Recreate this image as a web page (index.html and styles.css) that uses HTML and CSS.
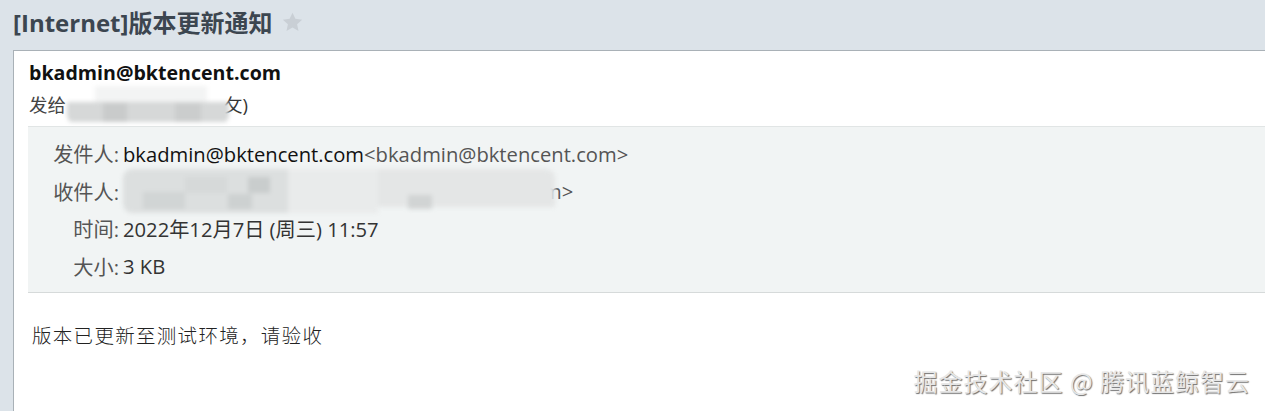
FILE: index.html
```html
<!DOCTYPE html>
<html lang="zh-CN">
<head>
<meta charset="utf-8">
<title>[Internet]版本更新通知</title>
<link rel="stylesheet" href="styles.css">
</head>
<body>
<div class="page">
  <div class="subject">
    <h1 class="subject-text">[Internet]版本更新通知</h1>
    <svg class="star" width="21" height="20" viewBox="0 0 24 23" aria-hidden="true"><path d="M12 0.8l3.3 7.1 7.8 0.9-5.8 5.3 1.6 7.7L12 17.9l-6.9 3.9 1.6-7.7L0.9 8.8l7.8-0.9z" fill="#c9cfd5"/></svg>
  </div>
  <div class="card">
    <div class="from-name">bkadmin@bktencent.com</div>
    <div class="to-line">发给<span class="mask mask-small"></span><span class="tail">攵)</span></div>
    <div class="meta">
      <div class="meta-row"><span class="label">发件人:</span><span class="value">bkadmin@bktencent.com</span><span class="addr">&lt;bkadmin@bktencent.com&gt;</span></div>
      <div class="meta-row"><span class="label">收件人:</span><span class="mask mask-wide"></span><span class="addr tail-addr">m&gt;</span></div>
      <div class="meta-row"><span class="label">时间:</span><span class="value dim">2022年12月7日 (周三) 11:57</span></div>
      <div class="meta-row"><span class="label">大小:</span><span class="value dim">3 KB</span></div>
    </div>
    <div class="body-text">版本已更新至测试环境，请验收</div>
  </div>
  <div class="watermark">掘金技术社区 @ 腾讯蓝鲸智云</div>
</div>
</body>
</html>
```

FILE: styles.css
```css
html, body {
  margin: 0;
  padding: 0;
  height: 100%;
}
body {
  background: #dce3e9;
  font-family: "Open Sans", "Noto Sans CJK SC", sans-serif;
  overflow: hidden;
}
.page {
  position: relative;
  height: 411px;
  display: flex;
  flex-direction: column;
}
.subject {
  height: 50px;
  display: flex;
  align-items: center;
  padding-left: 13px;
  box-sizing: border-box;
  gap: 10px;
}
.subject-text {
  margin: 0;
  font-size: 24px;
  font-weight: 700;
  color: #3c4650;
  line-height: 1;
  position: relative;
  top: -2px;
}
.star {
  position: relative;
  top: -3px;
}
.card {
  flex: 1;
  margin-left: 13px;
  background: #ffffff;
  border-left: 1px solid #a9b1b7;
  border-top: 1px solid #a9b1b7;
  padding-top: 9px;
}
.from-name {
  padding-left: 15px;
  font-size: 19.6px;
  font-weight: 700;
  color: #111;
  line-height: 26px;
}
.to-line {
  padding-left: 15px;
  margin-top: 6px;
  font-size: 18.5px;
  color: #444;
  height: 26px;
  line-height: 26px;
  display: flex;
  align-items: center;
}
.mask {
  display: inline-block;
  flex: none;
  filter: blur(2px);
  border-radius: 9px;
}
.mask-small {
  width: 162px;
  height: 38px;
  margin-left: 1px;
  background:
    linear-gradient(#c9cbcb, #c9cbcb) 36px 17px / 24px 19px no-repeat,
    linear-gradient(#cbcdcd, #cbcdcd) 108px 17px / 26px 19px no-repeat,
    linear-gradient(#d6d8d8, #d6d8d8) 0 16px / 162px 20px no-repeat,
    linear-gradient(#f3f4f4, #f3f4f4) 28px 0 / 112px 16px no-repeat;
}
.tail {
  color: #333;
  margin-left: -5px;
}
.meta {
  margin-left: 14px;
  margin-top: 8px;
  background: #f1f4f4;
  border-top: 1px solid #e1e5e5;
  border-bottom: 1px solid #d6dada;
  padding: 8px 0 7px;
}
.meta-row {
  display: flex;
  align-items: center;
  height: 37.5px;
  font-size: 20.2px;
  white-space: nowrap;
}
.label {
  width: 91px;
  flex: none;
  text-align: right;
  color: #555;
  margin-right: 4px;
}
.value { color: #111; }
.value.dim { color: #333; }
.addr { color: #555; }
.mask-wide {
  width: 432px;
  height: 44px;
  background:
    linear-gradient(#c9cdcd, #c9cdcd) 125px 8px / 22px 16px no-repeat,
    linear-gradient(#cdd1d1, #cdd1d1) 105px 25px / 24px 15px no-repeat,
    linear-gradient(#d1d5d5, #d1d5d5) 20px 23px / 42px 17px no-repeat,
    linear-gradient(#d1d4d4, #d1d4d4) 285px 26px / 24px 14px no-repeat,
    linear-gradient(#d6d9d9, #d6d9d9) 62px 8px / 42px 16px no-repeat,
    linear-gradient(#e9ebeb, #e9ebeb) 165px 0 / 90px 44px no-repeat,
    linear-gradient(#e4e6e6, #e4e6e6) 255px 0 / 177px 38px no-repeat,
    linear-gradient(#dcdfdf, #dcdfdf) 0 0 / 255px 44px no-repeat;
}
.tail-addr {
  margin-left: -12px;
}
.body-text {
  margin-top: 27px;
  padding-left: 18px;
  font-family: "Noto Sans CJK SC", sans-serif;
  font-weight: 300;
  font-size: 19.5px;
  letter-spacing: 1.3px;
  line-height: 30px;
  color: #222;
}
.watermark {
  position: absolute;
  right: 15px;
  bottom: 15px;
  font-family: "Noto Sans CJK SC", sans-serif;
  font-size: 24px;
  letter-spacing: 1px;
  color: #e6e6e6;
  text-shadow: 1px 1px 1px #6f6f6f, -1px -1px 0 #ffffff;
  line-height: 30px;
}
```
